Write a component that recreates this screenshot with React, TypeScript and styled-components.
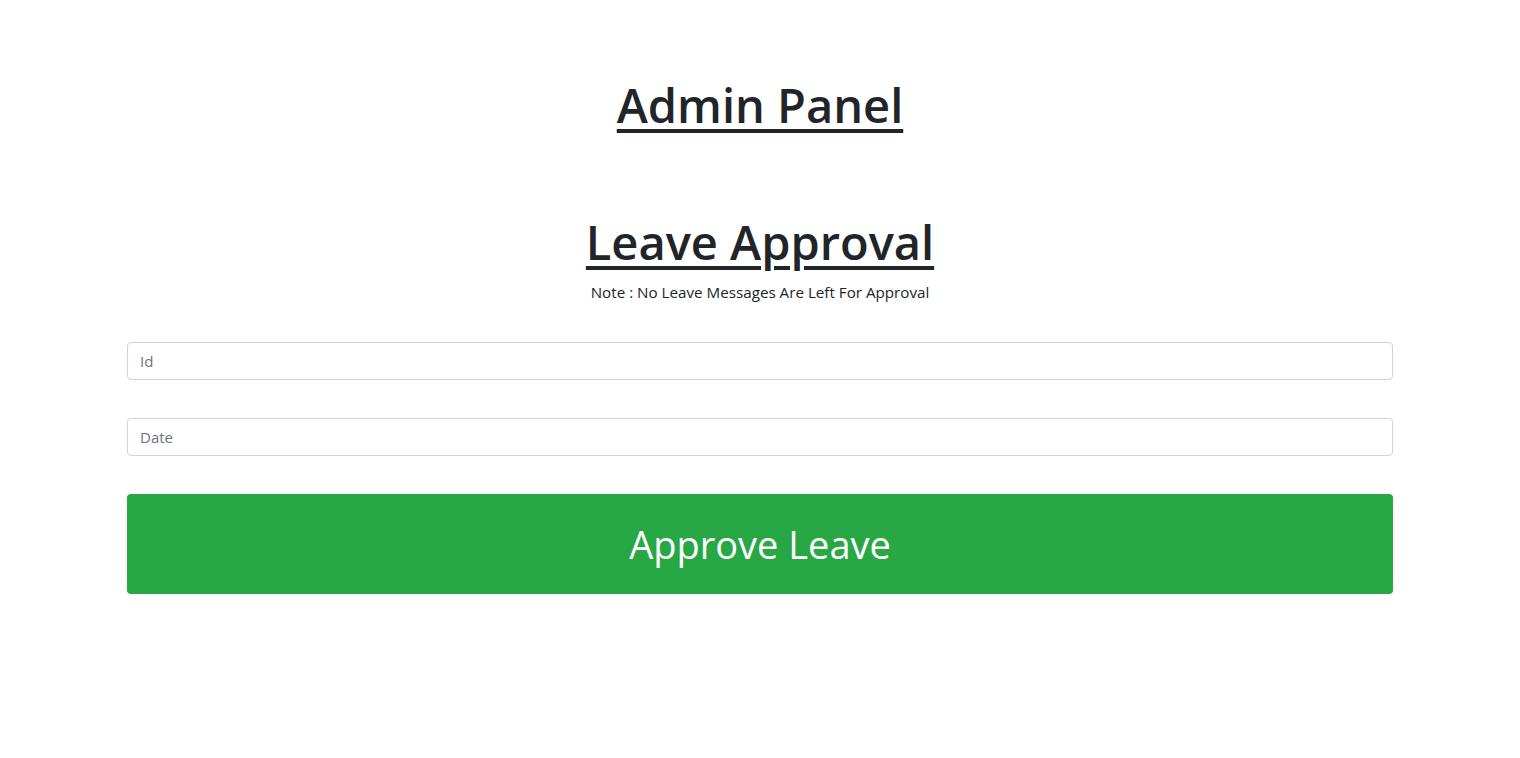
import React from "react";
import styled, { createGlobalStyle } from "styled-components";

const Global = createGlobalStyle`
  html, body { margin: 0; padding: 0; background: #fff; }
  body {
    font-family: "Open Sans", "Noto Sans", sans-serif;
    color: #212529;
  }
  * { box-sizing: border-box; }
`;

const Page = styled.main`
  padding: 77px 127px 0;
  display: flex;
  flex-direction: column;
`;

const Title = styled.h1<{ $top: number }>`
  margin: ${(p) => p.$top}px 0 0;
  text-align: center;
  font-size: 47px;
  font-weight: 600;
  line-height: 57px;
  text-decoration: underline;
  text-decoration-thickness: 4px;
  text-underline-offset: 6px;
  color: #212529;
`;

const Note = styled.p`
  margin: 10px 0 0;
  text-align: center;
  font-size: 15.2px;
  line-height: 22px;
`;

const Form = styled.form`
  display: flex;
  flex-direction: column;
  gap: 38px;
  margin-top: 39px;
`;

const Input = styled.input`
  width: 100%;
  height: 38px;
  padding: 6px 12px;
  border: 1px solid #ced4da;
  border-radius: 4px;
  font-family: inherit;
  font-size: 15px;
  color: #495057;
  background: #fff;
  &::placeholder { color: #6c757d; }
`;

const Button = styled.button`
  width: 100%;
  height: 100px;
  border: none;
  border-radius: 4px;
  background: #28a745;
  color: #fff;
  font-family: inherit;
  font-size: 38px;
  font-weight: 400;
`;

export default function App() {
  return (
    <>
      <Global />
      <Page>
        <Title $top={0}>Admin Panel</Title>
        <Title $top={80}>Leave Approval</Title>
        <Note>Note : No Leave Messages Are Left For Approval</Note>
        <Form onSubmit={(e) => e.preventDefault()}>
          <Input placeholder="Id" />
          <Input placeholder="Date" />
          <Button type="submit">Approve Leave</Button>
        </Form>
      </Page>
    </>
  );
}
